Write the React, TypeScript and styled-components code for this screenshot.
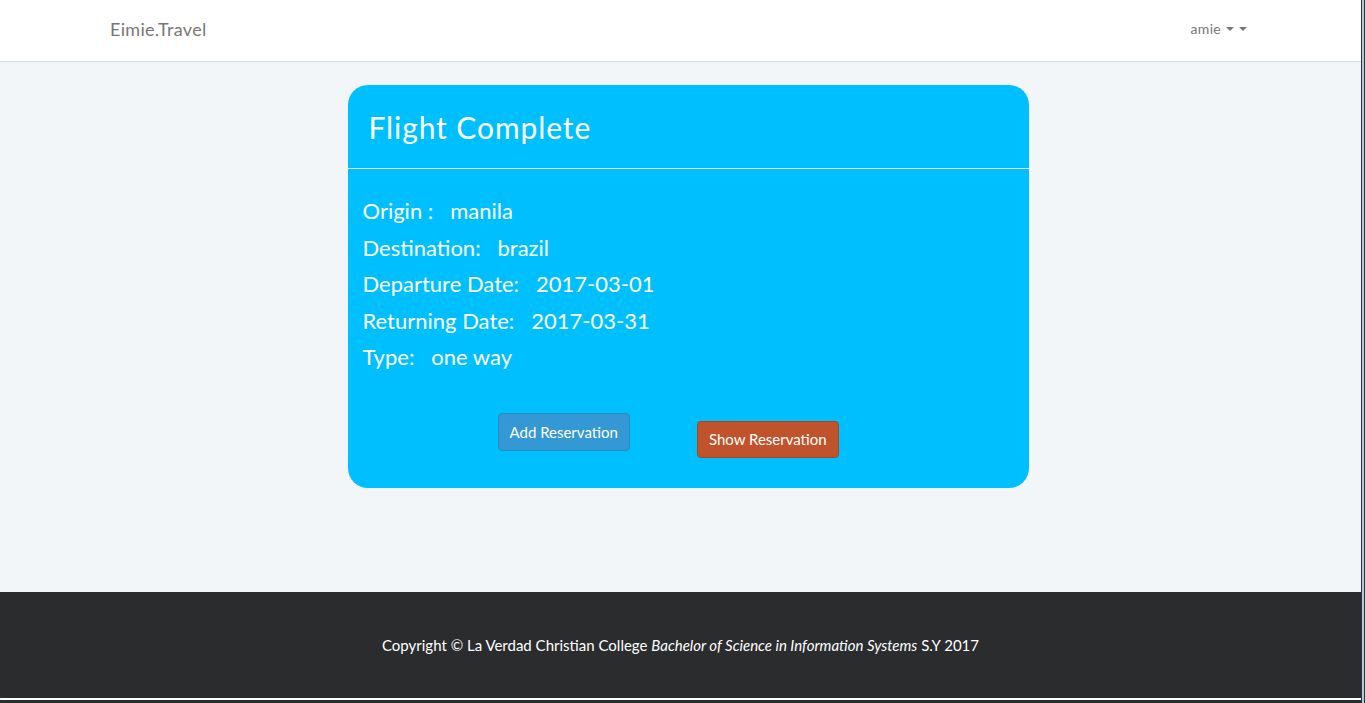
import React from "react";
import styled, { createGlobalStyle } from "styled-components";

const Global = createGlobalStyle`
  html, body { margin: 0; padding: 0; }
  body { font-family: "Lato", "Open Sans", sans-serif; background: #2b2c2e; overflow: hidden; }
  * { box-sizing: border-box; }
`;

const Frame = styled.div`
  display: flex;
  width: 1365px;
  height: 703px;
`;

const Page = styled.div`
  width: 1361px;
  display: flex;
  flex-direction: column;
  background: #f3f6f9;
`;

const Edge = styled.div`
  width: 4px;
  background: #b9c5d3;
  border-left: 1px solid #2f3540;
  border-right: 1px solid #2f3540;
`;

const Nav = styled.nav`
  height: 62px;
  background: #ffffff;
  border-bottom: 1px solid #d5dde5;
  display: flex;
  align-items: center;
  justify-content: space-between;
  padding: 0 114px 0 110px;
`;

const Brand = styled.a`
  font-size: 18px;
  color: #777777;
  letter-spacing: 0.3px;
  margin-top: -4px;
`;

const User = styled.div`
  display: flex;
  align-items: center;
  gap: 4px;
  font-size: 14px;
  color: #777777;
  letter-spacing: 0.3px;
  margin-top: -4px;
`;

const Caret = styled.span`
  display: inline-block;
  width: 0;
  height: 0;
  border-left: 4px solid transparent;
  border-right: 4px solid transparent;
  border-top: 4px solid #777777;
  margin-left: 1px;
`;

const Main = styled.main`
  flex: 1;
  display: flex;
  justify-content: center;
  padding: 23px 0 0 15px;
`;

const Card = styled.section`
  width: 681px;
  height: 403px;
  background: #00bfff;
  border-radius: 20px;
  color: #ffffff;
  display: flex;
  flex-direction: column;
`;

const CardHeader = styled.header`
  height: 84px;
  border-bottom: 1px solid #e8f8ff;
  display: flex;
  align-items: center;
  padding: 0 21px;
`;

const Title = styled.h2`
  margin: 0;
  font-size: 30px;
  font-weight: 400;
  letter-spacing: 0.9px;
  margin-top: 1px;
`;

const Body = styled.div`
  padding: 24px 15px 0 15px;
  display: flex;
  flex-direction: column;
`;

const Row = styled.div`
  font-size: 22px;
  line-height: 36.5px;
  white-space: pre;
`;

const Actions = styled.div`
  display: flex;
  align-items: flex-start;
  padding: 37px 0 0 135px;
  gap: 67px;
`;

const Button = styled.button<{ $tone: "blue" | "orange"; $offset: number }>`
  font-family: "Lato", "Open Sans", sans-serif;
  font-size: 15px;
  color: #ffffff;
  border-radius: 4px;
  padding: 0 11px;
  height: ${(p) => (p.$tone === "blue" ? 38 : 37)}px;
  margin-top: ${(p) => p.$offset}px;
  background: ${(p) => (p.$tone === "blue" ? "#3398d3" : "#c0532b")};
  border: 1px solid ${(p) => (p.$tone === "blue" ? "#2a88c0" : "#a8461f")};
  cursor: pointer;
`;

const Footer = styled.footer`
  height: 106px;
  background: #2b2c2e;
  display: flex;
  align-items: center;
  justify-content: center;
  color: #ffffff;
  font-size: 15px;
  padding-top: 0px;
  white-space: pre;
`;

const Rule = styled.div`
  height: 2px;
  background: #ffffff;
  margin-left: 1px;
`;

const Tail = styled.div`
  height: 3px;
  background: #2b2c2e;
`;

export default function App() {
  return (
    <>
      <Global />
      <Frame>
        <Page>
          <Nav>
            <Brand>Eimie.Travel</Brand>
            <User>
              amie <Caret /><Caret />
            </User>
          </Nav>
          <Main>
            <Card>
              <CardHeader>
                <Title>Flight Complete</Title>
              </CardHeader>
              <Body>
                <Row>{"Origin :   manila"}</Row>
                <Row>{"Destination:   brazil"}</Row>
                <Row>{"Departure Date:   2017-03-01"}</Row>
                <Row>{"Returning Date:   2017-03-31"}</Row>
                <Row>{"Type:   one way"}</Row>
                <Actions>
                  <Button $tone="blue" $offset={0}>Add Reservation</Button>
                  <Button $tone="orange" $offset={8}>Show Reservation</Button>
                </Actions>
              </Body>
            </Card>
          </Main>
          <Footer>
            Copyright © La Verdad Christian College <i>Bachelor of Science in Information Systems</i> S.Y 2017
          </Footer>
          <Rule />
          <Tail />
        </Page>
        <Edge />
      </Frame>
    </>
  );
}
